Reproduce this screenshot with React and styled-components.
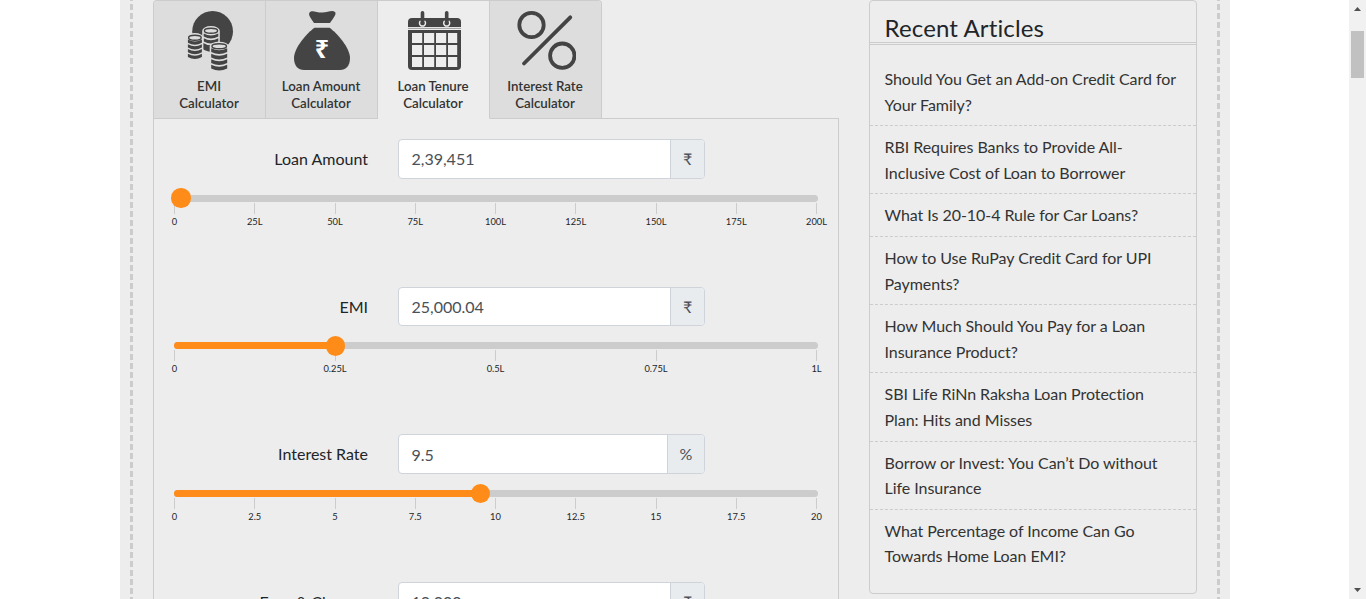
import React from 'react';
import styled, { createGlobalStyle } from 'styled-components';

const GlobalStyle = createGlobalStyle`
  * { box-sizing: border-box; }
  html, body { margin: 0; height: 100%; overflow: hidden; background: #fff; }
  body {
    font-family: Lato, "Noto Sans", sans-serif;
    font-size: 16px;
    line-height: 1.6;
    color: #212529;
    font-variant-ligatures: none;
  }
`;

const Viewport = styled.div`
  display: flex;
  height: 599px;
  overflow: hidden;
`;

const Stage = styled.div`
  flex: 1;
  display: flex;
  padding-left: 120px;
  align-items: flex-start;
`;

const Page = styled.div`
  width: 1110px;
  height: 599px;
  overflow: hidden;
  display: flex;
  justify-content: space-between;
  padding: 0 10px;
  background: #ededed;
`;

const DashRail = styled.div`
  width: 3px;
  background: repeating-linear-gradient(#ccc 0 6px, transparent 6px 8.985px) 0 -5px / 3px 700px no-repeat;
`;

const Columns = styled.main`
  display: flex;
  width: 1044px;
  gap: 30px;
  align-items: flex-start;
`;

const Calculator = styled.section`
  width: 686px;
`;

const TabList = styled.nav`
  display: flex;
  width: 449px;
  height: 119px;
  margin-bottom: -1px;
  position: relative;
  border: 1px solid #ccc;
  border-bottom: 0;
  border-radius: 4px 4px 0 0;
  overflow: hidden;
`;

const Tab = styled.button`
  flex: 0 0 ${(p) => (p.$last ? 111 : 112)}px;
  display: flex;
  flex-direction: column;
  align-items: center;
  padding: 8px 0 0;
  border: 0;
  border-right: ${(p) => (p.$last ? 0 : 1)}px solid #ccc;
  border-bottom: 1px solid ${(p) => (p.$active ? '#ededed' : '#ccc')};
  background: ${(p) => (p.$active ? '#ededed' : '#ddd')};
  color: #333;
  font: 600 13.3px/17px Lato, sans-serif;
  font-variant-ligatures: none;

  svg { display: block; width: 60px; height: 62px; margin-bottom: 7px; }
  span { display: block; width: 100px; padding-right: 1px; }
`;

const Panel = styled.div`
  height: 600px;
  border: 1px solid #ccc;
  padding: 20.2px 20px 0;
`;

const Group = styled.div`
  height: 147.6px;
`;

const FieldRow = styled.div`
  display: flex;
  height: 39.6px;
  align-items: stretch;
`;

const Label = styled.label`
  width: 194px;
  margin-right: 30px;
  text-align: right;
  line-height: 39.6px;
`;

const InputGroup = styled.div`
  display: flex;
  width: 307px;
  border: 1px solid #ced4da;
  border-radius: 4px;
  overflow: hidden;
  background: #fff;
  color: #495057;
`;

const Input = styled.input`
  flex: 1;
  min-width: 0;
  border: 0;
  padding: 0 12px 0 12.5px;
  outline: 0;
  color: inherit;
  background: transparent;
  font: 16px Lato, sans-serif;
`;

const Addon = styled.span`
  display: flex;
  width: ${(p) => (p.$wide ? 37 : 34)}px;
  align-items: center;
  justify-content: center;
  border-left: 1px solid #ced4da;
  background: #e9ecef;
`;

const Track = styled.div`
  position: relative;
  width: 644px;
  height: 7px;
  margin-top: 15.9px;
  border-radius: 4px;
  background: #ccc;
`;

const Fill = styled.div`
  height: 7px;
  border-radius: 4px;
  background: #ff8b18;
`;

const Handle = styled.span`
  position: absolute;
  top: -6.2px;
  width: 19.5px;
  height: 19.5px;
  margin-left: -9.75px;
  border-radius: 50%;
  background: #ff8b18;
`;

const Scale = styled.div`
  display: flex;
  justify-content: space-between;
  width: 642px;
  margin: 1px 0 0 0.5px;
`;

const Tick = styled.span`
  display: flex;
  flex-direction: column;
  align-items: center;
  width: 0;
  white-space: nowrap;
  font-size: 9.3px;
  line-height: 14px;

  &::before {
    content: '';
    flex: none;
    width: 1px;
    height: 11px;
    margin-bottom: 1px;
    background: #ccc;
  }
`;

const Articles = styled.aside`
  width: 328px;
  height: 594px;
  border: 1px solid #ccc;
  border-radius: 4px;
`;

const ArticlesTitle = styled.h3`
  height: 44px;
  margin: 0;
  padding: 12px 0 0 14.6px;
  border-bottom: 3px double #ccc;
  font-size: 24px;
  font-weight: 400;
  line-height: 29px;
  letter-spacing: 0.13px;
`;

const ArticleList = styled.ul`
  list-style: none;
  margin: 0;
  padding: 13px 0 0;
`;

const Article = styled.li`
  padding: 8px 17px 8px 14.5px;
  line-height: 25.6px;
  letter-spacing: -0.05px;
  color: #333;
  & + & { border-top: 1px dashed #ccc; }
`;

const Scrollbar = styled.div`
  display: flex;
  flex-direction: column;
  align-items: center;
  width: 17px;
  height: 599px;
  background: #f1f1f1;
  svg { display: block; flex: none; }
`;

const Thumb = styled.div`
  width: 13px;
  height: 47px;
  margin: 14px 0 auto;
  background: #c1c1c1;
`;

function Stack({ x, w, top, bands, h }) {
  const rx = w / 2;
  const end = bands[bands.length - 1] + h;
  return (
    <g>
      <path d={`M${x - 1.5} ${top}a${rx + 1.5} 4.6 0 0 1 ${w + 3} 0V${end + 1}q-${rx + 1.5} 5.5 -${w + 3} 0z`} fill="#ddd" />
      <ellipse cx={x + rx} cy={top} rx={rx - 0.7} ry="2.5" fill="#ddd" stroke="#444" strokeWidth="1.4" />
      {bands.map((b) => (
        <path key={b} d={`M${x} ${b}q${rx} 4 ${w} 0v${h}q-${rx} 4 -${w} 0z`} fill="#444" />
      ))}
    </g>
  );
}

function CoinsIcon() {
  return (
    <svg viewBox="0.6 0 60 62">
      <circle cx="33.2" cy="22.4" r="20.4" fill="#444" />
      <Stack x={24.3} w={14.6} top={21.7} bands={[24.4, 29.2]} h={3.2} />
      <Stack x={8.5} w={14} top={28.7} bands={[30.6, 35.3, 40, 44.7]} h={3.2} />
      <Stack x={31.8} w={16} top={37.3} bands={[39.2, 44.7, 50.2, 55.7]} h={3.8} />
    </svg>
  );
}

function BagIcon() {
  return (
    <svg viewBox="0 0 60 62">
      <path d="M17.5 3.5C20 .5 24 3.500 30 3.500S40 .5 43 3c2 2-2 6.500-5 11H22c-3-4.500-6-8-4.500-10.500z" fill="#444" />
      <path d="M22.500 18.800H37.500C45 24 58 39 58 49c0 8-4 12-10 12H12C6 61 2 57 2 49 2 39 15 24 22.500 18.800z" fill="#444" />
      <text x="30" y="48.500" textAnchor="middle" fill="#fff" fontFamily="Noto Sans, DejaVu Sans, sans-serif" fontWeight="700" fontSize="25">₹</text>
    </svg>
  );
}

function CalendarIcon() {
  return (
    <svg viewBox="0.5 0 60 62">
      <path d="M4.500 18V13q0-4 4-4H53.500q4 0 4 4v5z" fill="#444" />
      <path d="M4.500 19.400H57.500" stroke="#999" strokeWidth="1" />
      <path d="M4.500 21H57.500V57q0 4-4 4H8.500q-4 0-4-4z" fill="#444" />
      {[24, 36, 48].map((y) =>
        [8.5, 20.5, 32.5, 44.5].map((x) => (
          <rect key={`${x}-${y}`} x={x} y={y} width={x === 44.5 ? 9.2 : 10.2} height="10" fill="#ededed" />
        ))
      )}
      {[19, 43.2].map((x) => (
        <g key={x}>
          <path d={`M${x - 1.9} 11.800a3 3 0 1 0 3.800 0`} fill="none" stroke="#ededed" strokeWidth="1.500" />
          <path d={`M${x} 3.800V13.500`} stroke="#444" strokeWidth="3.600" strokeLinecap="round" />
        </g>
      ))}
    </svg>
  );
}

function PercentIcon() {
  return (
    <svg viewBox="0 0 60 62" fill="none" stroke="#444" strokeWidth="3.800" strokeLinecap="round">
      <circle cx="15.500" cy="16" r="12.200" />
      <circle cx="46.300" cy="46.700" r="12.200" />
      <path d="M54.300 8.300 8 54.500" />
    </svg>
  );
}

const tabs = [
  { first: 'EMI', Icon: CoinsIcon },
  { first: 'Loan Amount', Icon: BagIcon },
  { first: 'Loan Tenure', Icon: CalendarIcon, active: true },
  { first: 'Interest Rate', Icon: PercentIcon },
];

const fields = [
  { label: 'Loan Amount', value: '2,39,451', unit: '₹', fill: 0, handle: 7, ticks: ['0', '25L', '50L', '75L', '100L', '125L', '150L', '175L', '200L'] },
  { label: 'EMI', value: '25,000.04', unit: '₹', fill: 161, handle: 161.4, ticks: ['0', '0.25L', '0.5L', '0.75L', '1L'] },
  { label: 'Interest Rate', value: '9.5', unit: '%', fill: 306, handle: 306.4, ticks: ['0', '2.5', '5', '7.5', '10', '12.5', '15', '17.5', '20'] },
  { label: 'Fees & Charges', value: '10,000', unit: '₹', fill: 0, handle: 7, ticks: [] },
];

const articles = [
  'Should You Get an Add-on Credit Card for Your Family?',
  'RBI Requires Banks to Provide All-Inclusive Cost of Loan to Borrower',
  'What Is 20-10-4 Rule for Car Loans?',
  'How to Use RuPay Credit Card for UPI Payments?',
  'How Much Should You Pay for a Loan Insurance Product?',
  'SBI Life RiNn Raksha Loan Protection Plan: Hits and Misses',
  'Borrow or Invest: You Can’t Do without Life Insurance',
  'What Percentage of Income Can Go Towards Home Loan EMI?',
];

function Field({ label, value, unit, fill, handle, ticks }) {
  return (
    <Group>
      <FieldRow>
        <Label>{label}</Label>
        <InputGroup>
          <Input defaultValue={value} aria-label={label} />
          <Addon $wide={unit === '%'}>{unit}</Addon>
        </InputGroup>
      </FieldRow>
      <Track>
        <Fill style={{ width: fill }} />
        <Handle style={{ left: handle }} />
      </Track>
      <Scale>
        {ticks.map((t) => <Tick key={t}>{t}</Tick>)}
      </Scale>
    </Group>
  );
}

export default function App() {
  return (
    <>
      <GlobalStyle />
      <Viewport>
        <Stage>
          <Page>
            <DashRail />
            <Columns>
              <Calculator>
                <TabList>
                  {tabs.map(({ first, Icon, active }, i) => (
                    <Tab key={first} $active={active} $last={i === tabs.length - 1}>
                      <Icon />
                      <span>{first}</span>
                      <span>Calculator</span>
                    </Tab>
                  ))}
                </TabList>
                <Panel>
                  {fields.map((f) => <Field key={f.label} {...f} />)}
                </Panel>
              </Calculator>
              <Articles>
                <ArticlesTitle>Recent Articles</ArticlesTitle>
                <ArticleList>
                  {articles.map((a) => <Article key={a}>{a}</Article>)}
                </ArticleList>
              </Articles>
            </Columns>
            <DashRail />
          </Page>
        </Stage>
        <Scrollbar>
          <svg width="17" height="17"><path d="M5 11 8.500 7 12 11z" fill="#505050" /></svg>
          <Thumb />
          <svg width="17" height="17"><path d="M5 6h7L8.500 10z" fill="#505050" /></svg>
        </Scrollbar>
      </Viewport>
    </>
  );
}
